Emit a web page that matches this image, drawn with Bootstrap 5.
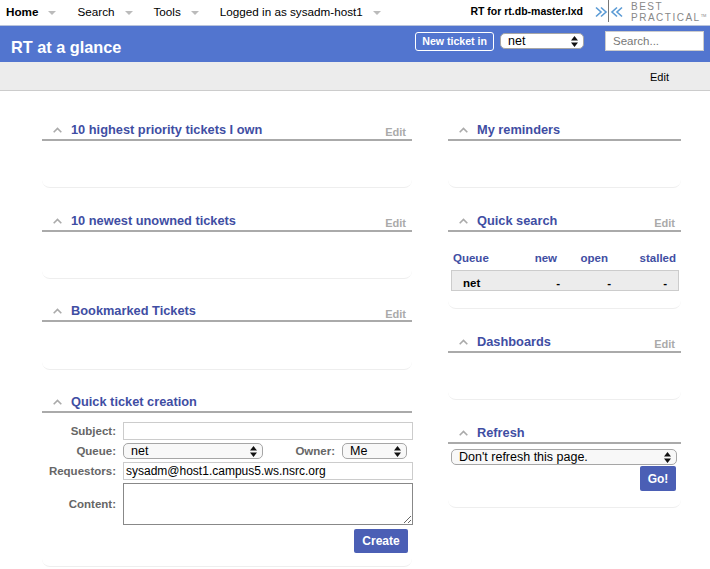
<!DOCTYPE html>
<html lang="en">

<head>
    <meta charset="UTF-8">
    <meta name="viewport" content="width=device-width, initial-scale=1.0">
    <title>RT at a glance</title>
    <link href="https://cdn.jsdelivr.net/npm/bootstrap@5.3.1/dist/css/bootstrap.min.css" rel="stylesheet">
    <style>
        body {
            font-family: "Liberation Sans", Arial, sans-serif;
            font-size: 12px;
            color: #000;
            background: #fff;
            overflow: hidden;
        }

        .top-menu {
            height: 26px;
            border-bottom: 1px solid #b9c4dc;
            padding: 0 0 2px 6px;
            font-size: 11.7px;
        }

        .top-menu a {
            color: #000;
            text-decoration: none;
        }

        .menu-caret {
            width: 0;
            height: 0;
            border-left: 4px solid transparent;
            border-right: 4px solid transparent;
            border-top: 4px solid #bbb;
            margin: 3px 21px 0 10px;
        }

        .rt-name {
            font-size: 10.5px;
            font-weight: 700;
            margin-right: 12px;
        }

        .bp-logo {
            width: 115px;
            height: 24px;
        }

        .bp-text {
            color: #888;
            font-size: 10px;
            line-height: 11px;
            letter-spacing: 1.5px;
            margin-left: 2px;
            white-space: nowrap;
        }

        .bp-text sup {
            font-size: 4px;
            letter-spacing: 0;
            top: -4px;
        }

        .title-bar {
            height: 36px;
            background: #5275cf;
            padding: 0 6px 6px 11px;
        }

        .page-title {
            color: #fff;
            font-size: 16.3px;
            font-weight: 700;
            margin: 14px 0 0;
        }

        .new-ticket {
            border: 1px solid #fff;
            border-radius: 3px;
            color: #fff;
            font-size: 10.6px;
            font-weight: 700;
            height: 19px;
            line-height: 17px;
            padding: 0 6px;
            margin-right: 6px;
        }

        .rt-select {
            appearance: none;
            -webkit-appearance: none;
            font-family: "Liberation Sans", Arial, sans-serif;
            font-size: 12.5px;
            line-height: 14px;
            height: 16px;
            padding: 0 14px 0 7px;
            color: #000;
            background-color: #f8f8f8;
            background-image: url("data:image/svg+xml,%3Csvg xmlns='http://www.w3.org/2000/svg' width='7' height='11'%3E%3Cpath d='M3.5 0 7 4.4H0zM3.5 11 0 6.6h7z' fill='%23111'/%3E%3C/svg%3E");
            background-repeat: no-repeat;
            background-position: right 5px center;
            border: 1px solid #a6a6a6;
            border-radius: 5px;
        }

        .queue-pick {
            width: 84px;
            margin-right: 21px;
            background-color: #fff;
        }

        .queue-wide {
            width: 140px;
        }

        .owner-pick {
            width: 65px;
        }

        .top-search {
            width: 99px;
            height: 20px;
            border: 1px solid #ccc;
            background: #fff;
            font-size: 11.5px;
            color: #777;
            padding: 0 7px;
            line-height: 18px;
        }

        .top-search::placeholder {
            color: #777;
        }

        .page-menu {
            height: 29px;
            background: #ececec;
            border-bottom: 1px solid #ccc;
            padding: 2px 41px 0 0;
            font-size: 11px;
        }

        .board {
            padding: 28px 29px 0 42px;
            gap: 36px;
        }

        .left-col {
            width: 370px;
        }

        .right-col {
            width: 233px;
        }

        .box {
            border-bottom: 1px solid #eee;
            border-radius: 0 0 8px 8px;
            margin-bottom: 22px;
        }

        .box-head {
            height: 22px;
            border-bottom: 2px solid #aaa;
            padding: 0 6px 0 11px;
        }

        .box-head svg {
            margin-right: 9px;
            margin-top: 2px;
        }

        .box-title {
            color: #3f4ea3;
            font-size: 12.8px;
            font-weight: 700;
            line-height: 16px;
            margin-top: 2px;
        }

        .box-edit {
            color: #aaa;
            font-size: 11px;
            font-weight: 700;
            margin-top: 6px;
        }

        .box-empty {
            height: 46px;
        }

        .box-snug {
            margin-bottom: 21px;
        }

        .box-tall .box-empty {
            height: 47px;
        }

        .box-tall .box-edit {
            margin-top: 8px;
        }

        .qs-body {
            padding: 18px 2px 16px 3px;
            height: 76px;
            box-sizing: border-box;
        }

        .qs-head,
        .qs-row {
            display: grid;
            text-align: right;
            font-weight: 700;
        }

        .qs-head {
            grid-template-columns: 66px 38px 51px 1fr;
            color: #3f4ea3;
            font-size: 11.5px;
            height: 16px;
            padding: 0 3px 0 2px;
        }

        .qs-row {
            grid-template-columns: 59px 38px 51px 1fr;
            height: 21px;
            line-height: 19px;
            background: #ececec;
            border: 1px solid #ccc;
            margin-top: 4px;
            padding: 3px 11px 0 11px;
            font-size: 11.5px;
        }

        .qs-head span:first-child,
        .qs-row span:first-child {
            text-align: left;
        }

        .form-area {
            padding: 9px 0 0 0;
            height: 153px;
        }

        .form-line {
            display: flex;
            align-items: center;
            margin-bottom: 3px;
        }

        .form-tag {
            width: 74px;
            text-align: right;
            color: #666;
            font-weight: 700;
            font-size: 11.5px;
            line-height: 16px;
            margin-right: 7px;
            flex: none;
        }

        .form-in {
            width: 290px;
            height: 18px;
            flex: none;
            border: 1px solid #ccc;
            background: #fff;
            font-size: 12px;
            padding: 0 2px;
            color: #000;
            font-family: "Liberation Sans", Arial, sans-serif;
        }

        .content-area {
            height: 42px;
            border: 1px solid #888;
            display: block;
            resize: both;
        }

        .owner-tag {
            width: 72px;
            text-align: right;
            color: #666;
            font-weight: 700;
            font-size: 11.5px;
            line-height: 16px;
            margin-right: 7px;
            flex: none;
        }

        .blue-btn {
            background: #4b5fb5;
            color: #fff;
            border: 0;
            border-radius: 2px;
            font-weight: 700;
            font-size: 12px;
            padding: 0;
        }

        .create-btn {
            width: 54px;
            height: 24px;
            margin: 4px 4px 0 0;
        }

        .go-btn {
            width: 36px;
            height: 25px;
            margin: 1px 1px 0 0;
        }

        .refresh-body {
            height: 63px;
            padding: 5px 4px 0 3px;
        }
    </style>
</head>

<body>

    <!-- top menu -->
    <div class="top-menu d-flex align-items-center">
        <a href="#" class="fw-bold">Home</a><span class="menu-caret"></span>
        <a href="#">Search</a><span class="menu-caret"></span>
        <a href="#">Tools</a><span class="menu-caret"></span>
        <a href="#">Logged in as sysadm-host1</a><span class="menu-caret"></span>
        <span class="rt-name ms-auto">RT for rt.db-master.lxd</span>
        <div class="bp-logo d-flex align-items-center flex-shrink-0">
            <svg width="34" height="24" viewBox="0 0 34 24">
                <path d="M1 7.500l5 4.500-5 4.500M6 7.500l5 4.500-5 4.500" fill="none" stroke="#5b9bd5" stroke-width="1.6" />
                <path d="M13.500 0v22" stroke="#777" stroke-width="1" />
                <path d="M22 7.500l-5 4.500 5 4.500M27 7.500l-5 4.500 5 4.500" fill="none" stroke="#5b9bd5" stroke-width="1.6" />
            </svg>
            <div class="bp-text">BEST<br>PRACTICAL<sup>TM</sup></div>
        </div>
    </div>

    <!-- title bar -->
    <div class="title-bar d-flex align-items-center">
        <h1 class="page-title">RT at a glance</h1>
        <span class="new-ticket ms-auto">New ticket in</span>
        <select class="rt-select queue-pick">
            <option>net</option>
        </select>
        <input class="top-search" type="text" placeholder="Search...">
    </div>

    <div class="page-menu d-flex align-items-center justify-content-end">Edit</div>

    <div class="board d-flex align-items-start">
        <div class="left-col">
            <div class="box">
                <div class="box-head d-flex align-items-center">
                    <svg width="9" height="6" viewBox="0 0 9 6"><path d="M.7 5.300 4.500 1.500l3.800 3.800" fill="none" stroke="#aaa" stroke-width="1.600" /></svg>
                    <span class="box-title">10 highest priority tickets I own</span>
                    <span class="box-edit ms-auto">Edit</span>
                </div>
                <div class="box-empty"></div>
            </div>
            <div class="box box-snug">
                <div class="box-head d-flex align-items-center">
                    <svg width="9" height="6" viewBox="0 0 9 6"><path d="M.7 5.300 4.500 1.500l3.800 3.800" fill="none" stroke="#aaa" stroke-width="1.600" /></svg>
                    <span class="box-title">10 newest unowned tickets</span>
                    <span class="box-edit ms-auto">Edit</span>
                </div>
                <div class="box-empty"></div>
            </div>
            <div class="box box-snug box-tall">
                <div class="box-head d-flex align-items-center">
                    <svg width="9" height="6" viewBox="0 0 9 6"><path d="M.7 5.300 4.500 1.500l3.800 3.800" fill="none" stroke="#aaa" stroke-width="1.600" /></svg>
                    <span class="box-title">Bookmarked Tickets</span>
                    <span class="box-edit ms-auto">Edit</span>
                </div>
                <div class="box-empty"></div>
            </div>
            <div class="box">
                <div class="box-head d-flex align-items-center">
                    <svg width="9" height="6" viewBox="0 0 9 6"><path d="M.7 5.300 4.500 1.500l3.800 3.800" fill="none" stroke="#aaa" stroke-width="1.600" /></svg>
                    <span class="box-title">Quick ticket creation</span>
                </div>
                <form class="form-area">
                    <div class="form-line">
                        <span class="form-tag">Subject:</span>
                        <input class="form-in" type="text">
                    </div>
                    <div class="form-line">
                        <span class="form-tag">Queue:</span>
                        <select class="rt-select queue-wide">
                            <option>net</option>
                        </select>
                        <span class="owner-tag">Owner:</span>
                        <select class="rt-select owner-pick">
                            <option>Me</option>
                        </select>
                    </div>
                    <div class="form-line">
                        <span class="form-tag">Requestors:</span>
                        <input class="form-in" type="text" value="sysadm@host1.campus5.ws.nsrc.org">
                    </div>
                    <div class="form-line mb-0">
                        <span class="form-tag">Content:</span>
                        <textarea class="form-in content-area"></textarea>
                    </div>
                    <div class="d-flex justify-content-end">
                        <button type="button" class="blue-btn create-btn">Create</button>
                    </div>
                </form>
            </div>
        </div>

        <div class="right-col">
            <div class="box">
                <div class="box-head d-flex align-items-center">
                    <svg width="9" height="6" viewBox="0 0 9 6"><path d="M.7 5.300 4.500 1.500l3.800 3.800" fill="none" stroke="#aaa" stroke-width="1.600" /></svg>
                    <span class="box-title">My reminders</span>
                </div>
                <div class="box-empty"></div>
            </div>
            <div class="box">
                <div class="box-head d-flex align-items-center">
                    <svg width="9" height="6" viewBox="0 0 9 6"><path d="M.7 5.300 4.500 1.500l3.800 3.800" fill="none" stroke="#aaa" stroke-width="1.600" /></svg>
                    <span class="box-title">Quick search</span>
                    <span class="box-edit ms-auto">Edit</span>
                </div>
                <div class="qs-body">
                    <div class="qs-head"><span>Queue</span><span>new</span><span>open</span><span>stalled</span></div>
                    <div class="qs-row"><span>net</span><span>-</span><span>-</span><span>-</span></div>
                </div>
            </div>
            <div class="box">
                <div class="box-head d-flex align-items-center">
                    <svg width="9" height="6" viewBox="0 0 9 6"><path d="M.7 5.300 4.500 1.500l3.800 3.800" fill="none" stroke="#aaa" stroke-width="1.600" /></svg>
                    <span class="box-title">Dashboards</span>
                    <span class="box-edit ms-auto">Edit</span>
                </div>
                <div class="box-empty"></div>
            </div>
            <div class="box">
                <div class="box-head d-flex align-items-center">
                    <svg width="9" height="6" viewBox="0 0 9 6"><path d="M.7 5.300 4.500 1.500l3.800 3.800" fill="none" stroke="#aaa" stroke-width="1.600" /></svg>
                    <span class="box-title">Refresh</span>
                </div>
                <div class="refresh-body">
                    <select class="rt-select w-100 d-block">
                        <option>Don't refresh this page.</option>
                    </select>
                    <div class="d-flex justify-content-end">
                        <button type="button" class="blue-btn go-btn">Go!</button>
                    </div>
                </div>
            </div>
        </div>
    </div>

    <script src="https://cdn.jsdelivr.net/npm/bootstrap@5.3.1/dist/js/bootstrap.bundle.min.js"></script>
</body>

</html>
